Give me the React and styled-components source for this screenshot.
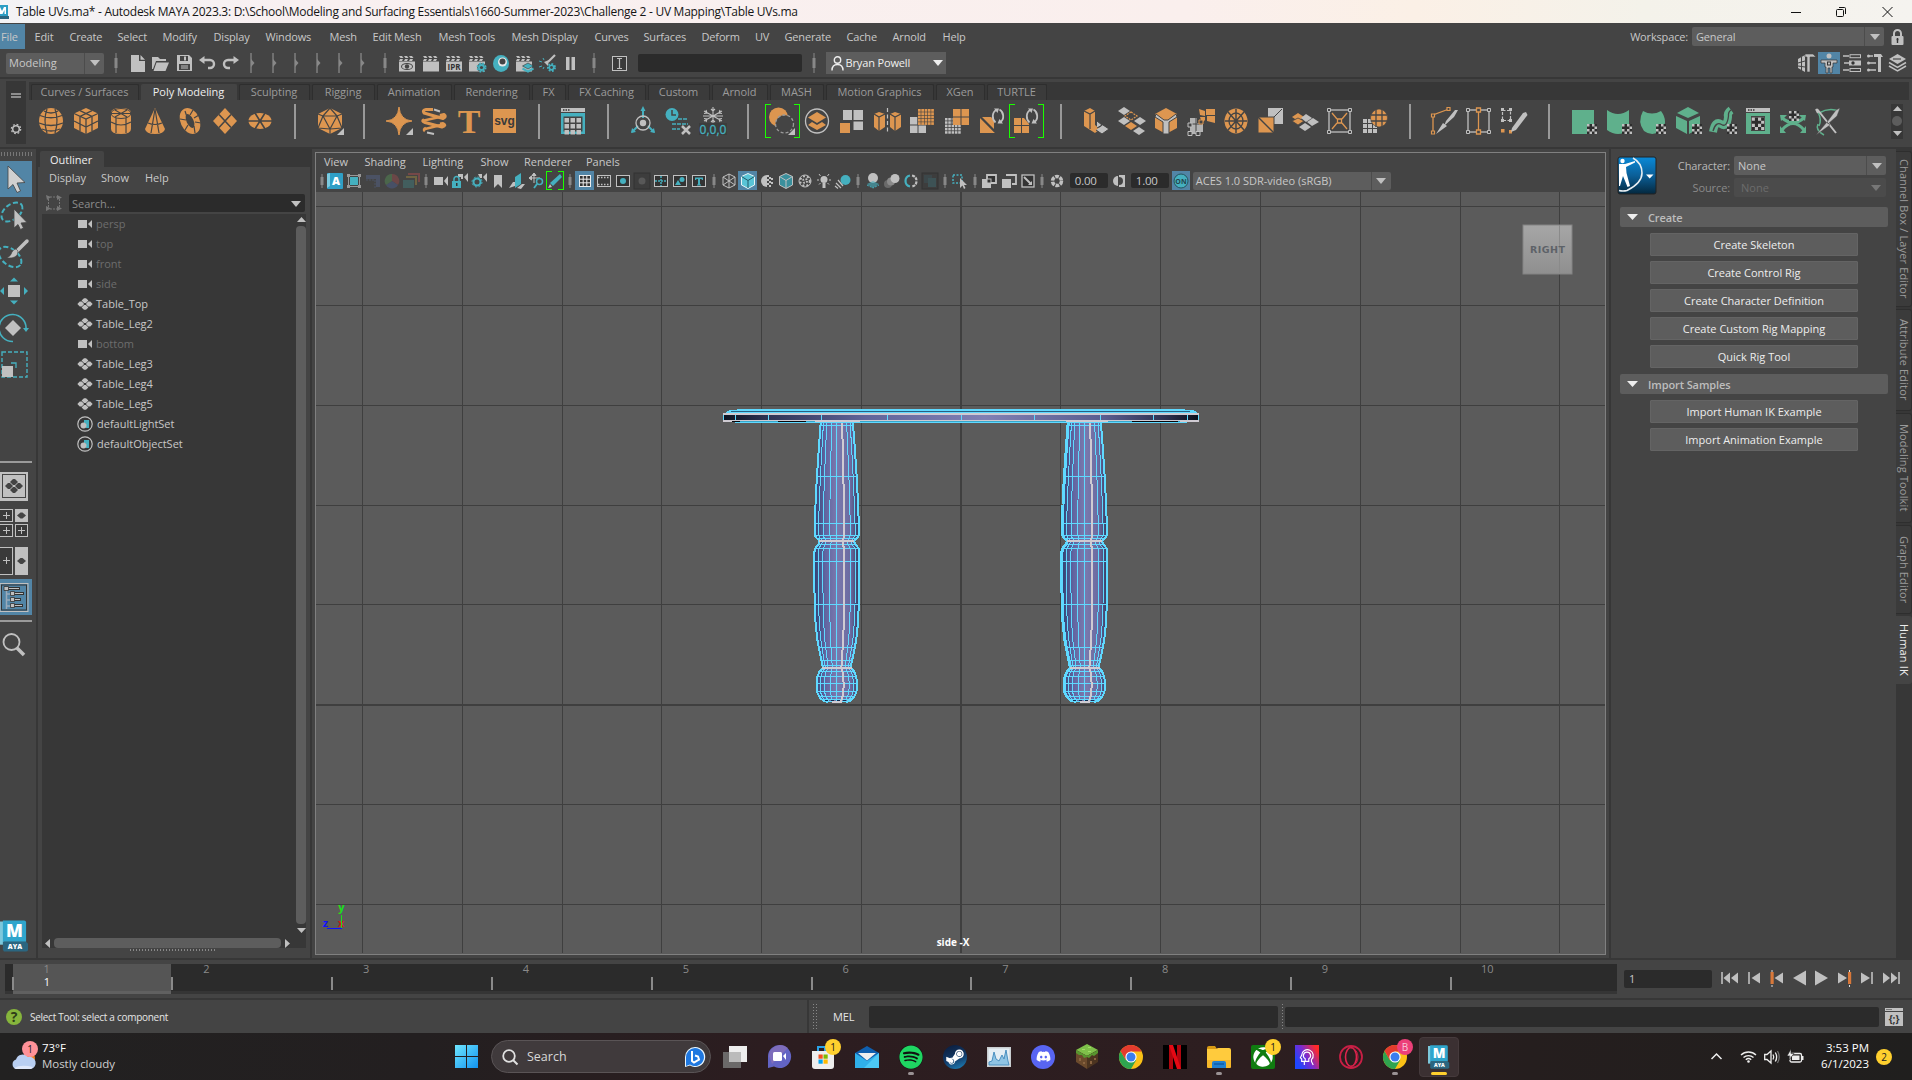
import React from "react";
import styled, { createGlobalStyle, css } from "styled-components";
import { FaSpotify, FaSteamSymbol, FaDiscord, FaXbox } from "react-icons/fa";

const O = "#dd9650";
const G = "#c0c0c0";
const T = "#45b0bf";
const N = "#5fb08c";
const BG = "#444444";
const DARK = "#373737";
const FIELD = "#2b2b2b";
const BTN = "#5d5d5d";
const BLUE = "#5285a6";

const Global = createGlobalStyle`
  * { box-sizing: border-box; }
  body { margin: 0; background: ${BG}; overflow: hidden; }
  #root { font-family: "Open Sans", "Noto Sans", sans-serif; font-size: 11px; color: #c8c8c8; }
`;

const Screen = styled.div`
  width: 1912px;
  height: 1080px;
  display: flex;
  flex-direction: column;
  background: ${BG};
  overflow: hidden;
  white-space: nowrap;
  line-height: 16px;
`;

const HLine = styled.div`
  height: 2px;
  flex: none;
  background: ${DARK};
`;
const VLine = styled.div`
  width: 2px;
  flex: none;
  align-self: stretch;
  background: ${DARK};
`;
const Spacer = styled.div`
  flex: ${(p) => (p.$w === undefined ? "1" : `0 0 ${p.$w}px`)};
`;
const Svg = styled.svg`
  display: block;
  flex: none;
  width: ${(p) => p.$w}px;
  height: ${(p) => p.$h}px;
  overflow: visible;
`;
const I = ({ w = 20, h = w, vw = w, vh = h, children }) => (
  <Svg $w={w} $h={h} viewBox={`0 0 ${vw} ${vh}`} fill="none">
    {children}
  </Svg>
);
const Slot = styled.div`
  flex: 0 0 ${(p) => p.$w}px;
  height: ${(p) => (p.$h ? `${p.$h}px` : "100%")};
  display: flex;
  align-items: center;
  justify-content: center;
  background: ${(p) => p.$bg || "transparent"};
`;

/* ---------- title bar ---------- */
const TitleBar = styled.header`
  height: 23px;
  flex: none;
  display: flex;
  align-items: center;
  background: linear-gradient(90deg, #f3f3f5, #f8f0f1 15%, #faefed 62%, #fbf0e6 74%, #f4f2ea 86%, #f5f3ef);
  color: #151515;
  font-size: 12px;
  letter-spacing: -0.27px;
`;
const TitleText = styled.div`
  width: 1765px;
  margin-left: 6px;
  padding-top: 1px;
`;

/* ---------- menu bar ---------- */
const MenuBar = styled.nav`
  height: 27px;
  flex: none;
  display: flex;
  align-items: center;
  letter-spacing: -0.16px;
`;
const MenuItem = styled.div`
  flex: 0 0 ${(p) => p.$w}px;
  height: ${(p) => (p.$active ? "25px" : "auto")};
  line-height: ${(p) => (p.$active ? "25px" : "16px")};
  ${(p) =>
    p.$active &&
    css`
      background: ${BLUE};
      margin-right: 9.500px;
      padding-left: 1px;
    `}
`;
const MENUS = [
  ["Edit", 35], ["Create", 48], ["Select", 45], ["Modify", 51], ["Display", 52], ["Windows", 64],
  ["Mesh", 43], ["Edit Mesh", 66], ["Mesh Tools", 73], ["Mesh Display", 83], ["Curves", 49],
  ["Surfaces", 58], ["Deform", 53.5], ["UV", 29.5], ["Generate", 62], ["Cache", 46], ["Arnold", 50], ["Help", 40],
];

const ComboBox = styled.div`
  flex: 0 0 ${(p) => p.$w}px;
  height: ${(p) => p.$h || 19}px;
  display: flex;
  align-items: center;
  background: ${(p) => (p.$dim ? "#4b4b4b" : BTN)};
  color: ${(p) => (p.$dim ? "#6c6c6c" : "#c8c8c8")};
  border-radius: 2px;
  padding-left: ${(p) => p.$pl || 4}px;
`;
const ComboText = styled.div`
  flex: 1;
`;
const ComboArrow = styled.div`
  width: ${(p) => p.$w || 20}px;
  height: 100%;
  display: flex;
  align-items: center;
  justify-content: center;
  border-left: ${(p) => (p.$plain ? "0" : "1px solid #4c4c4c")};
`;
const Tri = ({ c = G, w = 10, h = 6, d = "down" }) => (
  <I w={w} h={h}>
    <path
      fill={c}
      d={
        d === "down" ? `M0 0H${w}L${w / 2} ${h}Z`
        : d === "up" ? `M0 ${h}H${w}L${w / 2} 0Z`
        : d === "left" ? `M${w} 0V${h}L0 ${h / 2}Z`
        : `M0 0V${h}L${w} ${h / 2}Z`
      }
    />
  </I>
);

/* ---------- status line ---------- */
const StatusLine = styled.div`
  height: 27px;
  flex: none;
  display: flex;
  align-items: center;
  padding-bottom: 1px;
`;
const Handle = () => (
  <I w={4} h={20}>
    <path d="M2 0V20" stroke="#888" />
    <rect x="0.5" y="5" width="3" height="10" fill="#888" />
  </I>
);
const Collapse = () => (
  <I w={5} h={20}>
    <path d="M1 0V20" stroke="#888" strokeWidth="1.3" />
    <path d="M1 6L4.5 10L1 14Z" fill="#888" />
  </I>
);
const InputBox = styled.div`
  flex: 0 0 ${(p) => p.$w}px;
  height: ${(p) => p.$h || 18}px;
  background: ${FIELD};
  border-radius: 2px;
  display: flex;
  align-items: center;
  padding: 0 4px 0 5px;
  color: ${(p) => p.$c || "#c8c8c8"};
`;
const UserButton = styled.div`
  flex: 0 0 120px;
  height: 22px;
  background: ${BTN};
  display: flex;
  align-items: center;
  padding: 0 3px 0 5px;
  color: #f0f0f0;
  justify-content: space-between;
  letter-spacing: -0.15px;
`;
const UserName = styled.span`
  width: 85px;
`;

const Clap = ({ children }) => (
  <I w={17} h={17}>
    <path d="M0 1h3l1.500 2H1.500zM5 1h3l1.500 2h-3zM10 1h3l1.500 2h-3z M1 4h3l-1 2h-3zM6 4h3l-1 2h-3zM11 4h3l-1 2h-3z" fill={G} />
    <rect x="0" y="6.500" width="16" height="10" fill={G} />
    {children}
  </I>
);
const Gear = ({ x, y, r = 4, c = T }) => (
  <g>
    <circle cx={x} cy={y} r={r} fill={c} stroke="#333" strokeWidth="0.6" />
    <circle cx={x} cy={y} r={r} stroke={c} strokeWidth="2" strokeDasharray="1.7 1.500" />
    <circle cx={x} cy={y} r={r * 0.4} fill={BG} />
  </g>
);

const STATUS_ICONS = [
  [21, <I w={14} h={17}><path d="M0 0H8V6H14V17H0Z M9.500 0L14 4.700H9.500Z" fill={G} /></I>],
  [25, <I w={17} h={15}><path d="M0 1H6L8 3H14V5H4L1 13H0Z" fill={G} /><path d="M4.500 6.500H17L13.500 15H1.500Z" fill={G} /></I>],
  [22, <I w={15} h={16}><path d="M0 0H12L15 3V16H0Z" fill={G} /><rect x="3" y="1" width="8" height="5" fill={BG} /><rect x="7" y="1.500" width="2" height="4" fill={G} /><rect x="2" y="9" width="11" height="6" fill={BG} /><path d="M4 11h7M4 13h7" stroke={G} /></I>],
  [24, <I w={17} h={14}><path d="M3 4H11A4 4 0 0 1 11 12H9" stroke={G} strokeWidth="2.400" /><path d="M0 4L5.500 0V8Z" fill={G} /></I>],
  [22, <I w={17} h={14}><path d="M14 4H6A4 4 0 0 0 6 12H8" stroke={G} strokeWidth="2.400" /><path d="M17 4L11.500 0V8Z" fill={G} /></I>],
];
const RENDER_ICONS = [
  [23.4, <Clap><ellipse cx="8" cy="11.500" rx="6" ry="3.500" fill={BG} /><ellipse cx="8" cy="11.500" rx="5" ry="2.600" fill={G} /><circle cx="8" cy="11.500" r="2.200" fill={BG} /></Clap>],
  [23.4, <Clap />],
  [23.4, <Clap><text x="8" y="15" fontSize="8" fontWeight="700" textAnchor="middle" fill="#333">IPR</text></Clap>],
  [23.4, <Clap><Gear x={12.500} y={12.500} /></Clap>],
  [23, <I w={16} h={17}><ellipse cx="8" cy="8.500" rx="8" ry="8.500" fill={T} /><circle cx="9.500" cy="7" r="4.500" fill="#e8e8e8" /><circle cx="9.500" cy="6.500" r="3" fill={BG} /></I>],
  [23, <Clap><path d="M12 8l5.500 3l-5.500 3l-5.500-3z" fill={T} stroke="#333" strokeWidth=".6" /><path d="M6.500 13.500l5.500 3l5.500-3" stroke={T} strokeWidth="2" /></Clap>],
  [24, <I w={17} h={17}><path d="M16 0L9 7" stroke={G} strokeWidth="2.200" /><path d="M10 5L5 7L9 11Z" fill={G} /><path d="M0 6l3 1M0 12l3-1M4 14l1-2M4 3l1 2" stroke={T} /><Gear x={12.500} y={12.500} r={3.500} /></I>],
  [21, <I w={9} h={13}><path d="M0 0H3.500V13H0ZM5.500 0H9V13H5.500Z" fill={G} /></I>],
];

/* ---------- shelf ---------- */
const Shelf = styled.section`
  height: 68px;
  flex: none;
  display: flex;
`;
const ShelfGrip = styled.div`
  width: 20px;
  height: 63px;
  margin: 2px 3px 0 6px;
  background: ${DARK};
  display: flex;
  flex-direction: column;
  align-items: center;
  padding-top: 12px;
  gap: 25px;
`;
const ShelfBody = styled.div`
  flex: 1;
  margin: 3px 3px 0 0;
  display: flex;
  flex-direction: column;
`;
const TabStrip = styled.div`
  height: 18px;
  background: ${DARK};
  display: flex;
  align-items: flex-end;
  padding-left: 1.500px;
`;
const ShelfTab = styled.div`
  flex: 0 0 ${(p) => p.$w}px;
  height: 16px;
  line-height: 14.500px;
  text-align: center;
  letter-spacing: -0.05px;
  color: ${(p) => (p.$active ? "#eeeeee" : "#9a9a9a")};
  background: ${(p) => (p.$active ? BG : "#3b3b3b")};
  border: 1px solid ${(p) => (p.$active ? BG : "#2e2e2e")};
  border-bottom: 0;
  border-radius: 2px 2px 0 0;
  margin-right: 2px;
`;
const TABS = [
  ["Curves / Surfaces", 108], ["Poly Modeling", 96], ["Sculpting", 71], ["Rigging", 63], ["Animation", 75],
  ["Rendering", 76], ["FX", 34], ["FX Caching", 78], ["Custom", 62], ["Arnold", 56], ["MASH", 54],
  ["Motion Graphics", 108], ["XGen", 49], ["TURTLE", 60],
];
const ShelfIcons = styled.div`
  height: 42px;
  display: flex;
  align-items: center;
  padding-left: 4.600px;
`;
const ShelfSep = styled.div`
  width: 2px;
  height: 35px;
  background: #999;
`;
const Bracket = styled.div`
  position: relative;
  width: ${(p) => p.$w}px;
  height: ${(p) => p.$h}px;
  display: flex;
  align-items: center;
  justify-content: center;
  &::before, &::after {
    content: "";
    position: absolute;
    top: 0;
    bottom: 0;
    width: 5px;
    border: 1px solid #1aff00;
  }
  &::before { left: 0; border-right: 0; }
  &::after { right: 0; border-left: 0; }
`;
const ShelfScroll = styled.div`
  width: 12px;
  height: 35px;
  background: ${DARK};
  margin-left: 46px;
  display: flex;
  flex-direction: column;
  align-items: center;
  justify-content: space-around;
`;

const L = "#444";
const Checker = ({ x, y }) => (
  <g>
    <rect x={x} y={y} width="10" height="10" fill={G} />
    <path d={`M${x + 2.500} ${y}h2.500v2.500h2.500v2.500h-2.500v2.500h-2.500v-2.500h-2.500v-2.500h2.500z M${x + 7.500} ${y}h2.500v2.500h-2.500zM${x} ${y + 7.500}h2.500v2.500h-2.500zM${x + 7.500} ${y + 5}h2.500v2.500h-2.500zM${x + 5} ${y + 7.500}h2.500v2.500h-2.500z`} fill="#2d2d2d" />
  </g>
);
const Cells = ({ x, y, n, s, c, g = 1 }) => {
  const out = [];
  for (let i = 0; i < n; i++)
    for (let j = 0; j < n; j++)
      out.push(<rect key={`${i}-${j}`} x={x + i * (s + g)} y={y + j * (s + g)} width={s} height={s} fill={c} />);
  return <g>{out}</g>;
};
const S = ({ children }) => <I w={26} h={26}>{children}</I>;
const Spin = () => (
  <g>
    <path d="M16.500 14.500C12.500 11 13 4 17.500 2M20.500 1.500C25 4 25.500 11 21.500 14" stroke={G} strokeWidth="1.800" />
    <path d="M15 0.500L20 .5L18.500 5Z M24 15.500L18.500 15.500L20.500 11Z" fill={G} />
  </g>
);

const SHELF = [
  <S><ellipse cx="13" cy="13" rx="12" ry="13" fill={O} /><path d="M2 7.500Q13 12 24 7.500M1 15Q13 20 25 15M9 1Q5 12 9 25M17 1Q21 12 17 25M6 3Q13 7 20 3M4 21Q13 25 22 21" stroke={L} strokeWidth="1.300" /></S>,
  <S><path d="M13 0L25 5.500V20L13 26L1 20V5.500Z" fill={O} /><path d="M1 5.500L13 11L25 5.500M13 11V26M7 2.700L19 8.300V23M19 2.700L7 8.300V23M1 13L13 19L25 13" stroke={L} strokeWidth="1.300" /></S>,
  <S><path d="M3 5Q3 0 13 0T23 5V21Q23 26 13 26T3 21Z" fill={O} /><ellipse cx="13" cy="5.500" rx="10" ry="5" stroke={L} /><path d="M3 5.500H23M7 2L19 9M19 2L7 9M8 10V25M18 10V25M3 14Q13 20 23 14" stroke={L} strokeWidth="1.200" /></S>,
  <S><path d="M13 0L23 21Q22 26 13 26T3 21Z" fill={O} /><path d="M13 1L9 25M13 1L17 25M6 15Q13 18 20 15" stroke={L} strokeWidth="1.200" /></S>,
  <S><ellipse cx="13" cy="13" rx="6.500" ry="10.500" stroke={O} strokeWidth="6" transform="rotate(-25 13 13)" /><path d="M8 3l2 6M16 2l-3 5M3 11l6 1M8 22l3-5M18 25l-1-7M24 15l-6-1M22 7l-5 3" stroke={L} strokeWidth="1.200" /></S>,
  <S><path d="M13 0L25 13L13 26L1 13Z" fill={O} /><path d="M7 6.500L19 19.500M19 6.500L7 19.500" stroke={L} strokeWidth="1.600" /></S>,
  <S><ellipse cx="13" cy="13" rx="11.500" ry="8" fill={O} /><path d="M1 13H25M8 5L18 21M18 5L8 21" stroke={L} strokeWidth="1.600" /></S>,
  null,
  <S><path d="M13 0L25 6V20L13 26L1 20V6Z" fill={O} /><path d="M13 0L6 8H20ZM6 8L13 21L20 8M1 6L6 8L1 20L13 21L25 20L20 8L25 6M13 21V26" stroke={L} strokeWidth="1.200" /><path d="M27 20V27H20Z" fill={G} /></S>,
  null,
  <S><path d="M13 -1Q14 12 26 13Q14 14 13 27Q12 14 0 13Q12 12 13 -1Z" fill={O} stroke={O} /><path d="M27 20V27H20Z" fill={G} /></S>,
  <S>
    <path d="M12 1.500H5Q1 2 3 5L22 10.500Q26 9 23 6.500L19 7.500M3 11.500Q0 13 4 14.500L21 19Q26 17.500 22 15.500L19 16M5 20Q2 21.500 4 23" stroke={O} strokeWidth="3" strokeLinejoin="round" />
    <path d="M3 12.500L23 8M4 21L22 16.500" stroke={O} strokeWidth="2.400" />
    <path d="M6 24.500L13 26M13 1.500L19 3.500" stroke={G} strokeWidth="2" />
  </S>,
  <S><text x="13" y="25" fontSize="34" fontFamily="Liberation Serif, serif" fontWeight="700" textAnchor="middle" fill={O}>T</text></S>,
  <S><rect x="2" y="1" width="23" height="24" fill={O} /><text x="13.500" y="17" fontSize="12" fontWeight="700" fontFamily="Liberation Sans, sans-serif" textAnchor="middle" fill="#3a3a3a">svg</text></S>,
  null,
  <S><rect x="1" y="0" width="24" height="4" fill={G} /><path d="M3 2h1.500m1 0h1.500m1 0h1.500" stroke="#333" strokeWidth="1.500" /><rect x="1" y="5" width="24" height="21" fill={T} /><rect x="3.500" y="8.500" width="19" height="15" fill={BG} /><Cells x={4.500} y={10} n={3} s={4.500} g={1.500} c={G} /></S>,
  null,
  <S><path d="M13 0V10M2 24L8 18M18 18L24 24" stroke={T} strokeWidth="2" /><path d="M1 25l1-5l4 4zM25 25l-1-5l-4 4zM13 -2l-2.500 5h5z" fill={T} /><circle cx="13" cy="15" r="7" stroke={G} strokeWidth="1.300" /><circle cx="13" cy="15" r="3.200" fill={G} /></S>,
  <S><circle cx="7" cy="6.500" r="6.500" fill={T} /><path d="M7 2V7H11" stroke={BG} strokeWidth="1.500" /><path d="M13 11H23M7 16H23M7 21H15" stroke={T} strokeWidth="1.600" strokeDasharray="4 1" /><path d="M17 18L25 26M25 18L17 26" stroke={G} strokeWidth="2.500" /></S>,
  <S><path d="M13 -1V15M4 3L22 13M22 3L4 13M3 8H23M11 1l2 2l2-2M11 14l2-2l2 2M6 2l1 3l-3 .5M20 2l-1 3l3 .5M6 14l1-3l-3-.5M20 14l-1-3l3-.5" stroke={G} strokeWidth="1.100" /><rect x="-1" y="15" width="28" height="12" fill="#3c3c3c" /><text x="13" y="25.500" fontSize="12" textAnchor="middle" fill={T} stroke={T} strokeWidth=".3">0,0,0</text></S>,
  null,
  <Bracket $w={35} $h={34}><S><circle cx="9.500" cy="9" r="9.500" fill={O} /><circle cx="15.500" cy="16" r="9" fill={BG} stroke="#999" strokeWidth="1.300" strokeDasharray="3 2" /><path d="M26 20V27H19Z" fill={G} /></S></Bracket>,
  <S><ellipse cx="13" cy="13" rx="11.500" ry="12" stroke={G} strokeWidth="1.300" /><path d="M13 4L22 9.500L13 15L4 9.500Z" fill={O} /><path d="M13 17L18 14L22 17L13 22L4 17L8 14Z" fill={O} /></S>,
  <S><path d="M4 2H13V12H4ZM14.500 2H24V12H14.500ZM14.500 13.500H24V22H14.500Z" fill={G} /><rect x="1" y="15" width="10" height="10" fill={O} /></S>,
  <S><path d="M5 4L11 6V19L5 23L0 19V6Z M21 4L27 6V19L21 23L16 19V6Z" fill={O} /><path d="M0 6L5 9L11 6M5 9V23M16 6L21 9L27 6M21 9V23" stroke={L} strokeWidth="1.200" /><path d="M13.500 0V26" stroke={G} strokeWidth="1.200" strokeDasharray="4 2.500" /></S>,
  <S><Cells x={1} y={9} n={2} s={7.500} c={G} /><rect x="8.500" y="1" width="16.500" height="15.500" fill={BG} /><Cells x={9} y={1} n={5} s={2.700} c={O} g={0.600} /></S>,
  <S><Cells x={1} y={10} n={5} s={2.500} c={G} g={0.800} /><rect x="8.500" y="0" width="17" height="17" fill={BG} /><Cells x={9} y={1} n={2} s={7.500} c={O} /></S>,
  <S><path d="M1 10V25H16Z" fill={O} /><path d="M3 9H15V21Z" fill={O} /><path d="M1.500 9L16 24" stroke={L} strokeWidth="1.300" /><path d="M12 0H26V16H19L12 9Z" fill={BG} /><Spin /></S>,
  <Bracket $w={35} $h={34}><S><Cells x={1} y={10} n={2} s={7} c={O} /><path d="M11 0H26V16H16L11 10Z" fill={BG} /><Spin /></S></Bracket>,
  null,
  <S><path d="M7 0L12 3V17L17 21L12 25L1 18V3Z" fill={O} /><path d="M1 3L7 6L12 3M7 6V21" stroke={L} strokeWidth="1.200" /><path d="M14 13L19 17L14 20M20 17L26 21L19 26L13 22" fill={G} stroke={L} /></S>,
  <S><path d="M6 -1L12 3L6 7L0 3ZM6 9L12 13L6 17L0 13ZM22 9L28 13L22 17L16 13ZM21 19L27 23L21 27L15 23Z" fill={G} /><path d="M13 14L19 18L13 22L7 18Z" fill={O} /><path d="M13 4L19 8L13 12L7 8Z" stroke={O} strokeWidth="1.200" strokeDasharray="2 1" /></S>,
  <S><path d="M13 0L24 6V20L13 26L2 20V6Z" fill={O} /><path d="M3 6L11 12H15L23 6L24 9L16 14V26H10V14L2 9Z" fill={G} stroke={L} /></S>,
  <S><path d="M11 1L17 3V8L12 7ZM18 1H27V7H18ZM19 8H27V15L19 13ZM12 9L17 9V12L14 15Z" fill={O} /><path d="M2 10H9V15H15V24H8V26H2Z" fill={G} opacity=".9" /><path d="M2 16h12M8 10v15" stroke={L} /><path d="M0 15h4v4h-4zM0 23.500h4v4h-4zM8 23.500h4v4h-4z" fill={BG} stroke={G} /><path d="M11 12h4v4h-4z" fill={BG} stroke={O} /></S>,
  <S><ellipse cx="13" cy="13" rx="11.500" ry="12.500" fill={O} /><ellipse cx="13" cy="13" rx="7" ry="8" stroke={L} strokeWidth="1.300" /><path d="M2 13H24M13 1V25M5 4L21 22M21 4L5 22" stroke={L} strokeWidth="1.500" /></S>,
  <S><path d="M11 0H26V16H17V9H11Z" fill={G} /><path d="M17 9L25 1" stroke={L} /><rect x="1" y="9" width="16" height="16" fill={O} stroke={L} /><path d="M1 9L17 25" stroke={L} strokeWidth="1.500" /></S>,
  <S><path d="M6 5L12 9L6 13L0 9Z" fill={O} /><path d="M0 13L6 10L12 13L6 17Z" fill={O} stroke={L} strokeWidth=".8" /><path d="M14 6L20 10L14 14L9 10ZM21 10L27 14L20 18L15 14ZM13 15L19 19L13 23L7 19Z" fill={G} /></S>,
  <S><rect x="2" y="2" width="21" height="22" stroke={G} strokeWidth="1.300" /><path d="M5 5L10 11M20 5L15 11M5 21L10 15M20 21L15 15" stroke={O} strokeWidth="1.300" /><path d="M10.500 11h4v4h-4z" stroke={O} strokeWidth="1.300" /><path d="M0.500 .5h3v3h-3zM21.500 .5h3v3h-3zM.5 22.500h3v3h-3zM21.500 22.500h3v3h-3z" fill={BG} stroke={G} /></S>,
  <S><Cells x={1} y={11} n={3} s={4} c={G} /><ellipse cx="17" cy="10" rx="8.500" ry="9" fill={O} stroke={L} strokeWidth=".6" /><path d="M9 7H25M9 13H25M14 1V19M20 1V19" stroke={L} strokeWidth="1.300" /></S>,
  null,
  <S><path d="M2 24V7L18 1" stroke={O} strokeWidth="1.300" /><path d="M0.500 23h3v3h-3zM.5 6h3v3h-3zM16 -.5h3v3h-3z" fill={BG} stroke={O} strokeWidth="1.200" /><path d="M27 2L23 9L13 18L15 13L24 2Z M12 15L16 18L5 26Z" fill={G} /></S>,
  <S><rect x="2" y="2" width="21" height="22" stroke={G} strokeWidth="1.300" /><path d="M12.500 3V23" stroke={O} strokeWidth="1.300" /><path d="M0.500 .5h3v3h-3zM21.500 .5h3v3h-3zM.5 22.500h3v3h-3zM21.500 22.500h3v3h-3z" fill={BG} stroke={G} /><path d="M10.500 0h4v4h-4zM10.500 22h4v4h-4z" fill={BG} stroke={O} strokeWidth="1.300" /></S>,
  <S><rect x="1.500" y="2.500" width="8" height="10" stroke={G} strokeWidth="1.200" strokeDasharray="3 1.500" /><path d="M0 0h3v3h-3zM8 0h3v3h-3zM0 11h3v3h-3zM8 11h3v3h-3z" fill={G} /><rect x="0" y="21" width="3.500" height="3.500" fill={O} /><rect x="8" y="22" width="3" height="3.500" fill={O} /><path d="M11 20L22 5L25 4L26.500 7L15 22L10 24Z" fill={G} /></S>,
  null,
  <S><rect x="1" y="2" width="22" height="24" fill={N} /><Checker x={16} y={16} /></S>,
  <S><path d="M1 2Q12 10 23 2V22Q12 30 1 22Z" fill={N} /><Checker x={16} y={16} /></S>,
  <S><path d="M3 3Q12 8 21 3Q29 14 21 23Q12 29 4 23Q-3 14 3 3Z" fill={N} /><Checker x={16} y={16} /></S>,
  <S><path d="M13 -1L24 5L13 10L2 5ZM1 8L12 13V26L1 20ZM14 13L25 8V20L14 26Z" fill={N} /><Checker x={17} y={16} /></S>,
  <S><path d="M3 24Q5 12 11 16T18 9Q17 5 21 2" stroke={N} strokeWidth="8" /><path d="M3 23Q6 13 11.500 16.500T18.500 8Q18 4 21 2" stroke={L} strokeWidth="1.300" /><Checker x={17} y={16} /></S>,
  <S><rect x="1" y="0" width="24" height="4" fill={G} /><path d="M3 2h1.500m1 0h1.500m1 0h1.500" stroke="#333" strokeWidth="1.500" /><rect x="1" y="5" width="24" height="21" fill={N} /><rect x="6" y="8" width="14" height="15" fill={BG} /><g transform="translate(-3.500,-3) scale(1.250)"><Checker x={8.200} y={10} /></g></S>,
  <S><path d="M2 10Q13 19 24 10M2 22Q13 9 24 22" stroke={N} strokeWidth="3" /><path d="M0 7L7 7L1 13ZM26 7L19 7L25 13ZM0 25V18L6 25ZM26 25V18L20 25Z" fill={N} /><Checker x={9} y={3} /></S>,
  <S><path d="M4 5Q14 -1 24 3M3 16Q0 22 9 27M3 4Q7 12 4 18" stroke={N} strokeWidth="1.500" /><path d="M2 1L21 25M1 1l2 4" stroke={G} strokeWidth="2" /><path d="M25 0L22 8L13 16L12 14L21 2Z M12 14L15 17L1 27Z" fill={G} stroke={L} strokeWidth=".5" /></S>,
];

/* ---------- main area ---------- */
const Main = styled.main`
  height: 809px;
  flex: none;
  display: flex;
`;
const Toolbox = styled.aside`
  width: 36px;
  flex: none;
  display: flex;
  flex-direction: column;
  padding-top: 3px;
`;
const Dots = styled.div`
  width: 32px;
  height: 4px;
  flex: none;
  margin-bottom: 5px;
  background-image: radial-gradient(circle, #777 0.8px, transparent 1px);
  background-size: 3px 2px;
`;
const Tool = styled.div`
  width: 32px;
  height: ${(p) => p.$h || 38}px;
  flex: none;
  display: flex;
  align-items: center;
  justify-content: flex-start;
  background: ${(p) => (p.$active ? BLUE : "transparent")};
`;
const ToolSep = styled.div`
  width: 32px;
  height: 2px;
  flex: none;
  background: #9a9a9a;
  margin-top: ${(p) => p.$mt}px;
  margin-bottom: ${(p) => p.$mb}px;
`;
const diamonds = (cx, cy, c, k = 1) => (
  <g fill={c}>
    {[[0, -4], [-5, 0], [5, 0], [0, 4]].map(([x, y], i) => {
      const X = cx + x * k;
      const Y = cy + y * k;
      const a = 4 * k;
      const b = 2.900 * k;
      return <path key={i} d={`M${X - a} ${Y}L${X - 1} ${Y - b}H${X + 1}L${X + a} ${Y}L${X + 1} ${Y + b}H${X - 1}Z`} />;
    })}
  </g>
);
const Flat = ({ x, y }) => <path d={`M${x - 4.500} ${y}L${x - 1} ${y - 3}H${x + 1}L${x + 4.500} ${y}L${x + 1} ${y + 3}H${x - 1}Z`} fill="#444" />;
const Plus = ({ x, y }) => <path d={`M${x - 3.500} ${y}h7M${x} ${y - 3.500}v7`} stroke={G} strokeWidth="1" />;

const MayaLogo = ({ w, h }) => (
  <I w={w} h={h} vw={30} vh={32}>
    <path d="M0 1H4V25H0Z" fill="#7cc8dc" />
    <path d="M3 0H25Q27 0 27 2V22H3Z" fill="#2fa5cc" />
    <path d="M3 22H27L29 24V30Q29 32 27 32H4L3 30Z" fill="#2b6680" />
    <text x="15" y="17.500" fontSize="18" fontWeight="800" textAnchor="middle" fill="#fff">M</text>
    <text x="15.500" y="29.500" fontSize="7" fontWeight="800" textAnchor="middle" fill="#fff">AYA</text>
  </I>
);

/* ---------- outliner ---------- */
const Outliner = styled.section`
  width: 272px;
  flex: none;
  display: flex;
  flex-direction: column;
`;
const OutlinerTabs = styled.div`
  height: 18px;
  background: ${DARK};
  padding: 2px 0 0 2px;
`;
const OutlinerTab = styled.div`
  width: 64px;
  height: 16px;
  background: ${BG};
  border-radius: 2px 2px 0 0;
  padding-left: 10px;
  line-height: 17px;
  color: #eee;
`;
const OutlinerMenu = styled.div`
  height: 23px;
  display: flex;
  padding: 0 0 1px 11px;
  align-items: center;
`;
const SearchRow = styled.div`
  height: 24px;
  display: flex;
  align-items: center;
  padding: 1px 0 0 8px;
  gap: 7px;
`;
const SearchField = styled.div`
  width: 236px;
  height: 18px;
  background: ${FIELD};
  border-radius: 2px;
  display: flex;
  align-items: center;
  justify-content: space-between;
  padding: 2px 4px 0 3px;
  color: #8c8c8c;
  font-size: 11px;
`;
const Tree = styled.div`
  width: 264px;
  height: 734px;
  margin-left: 4px;
  background: ${DARK};
  display: flex;
  flex-direction: column;
`;
const TreeBody = styled.div`
  height: 724px;
  display: flex;
  justify-content: space-between;
`;
const Rows = styled.div`
  padding-left: 35px;
`;
const Row = styled.div`
  height: 20px;
  display: flex;
  align-items: center;
  gap: ${(p) => (p.$set ? 4 : 3)}px;
  color: ${(p) => (p.$dim ? "#6d6d6d" : "#c8c8c8")};
`;
const VScroll = styled.div`
  width: 10px;
  display: flex;
  flex-direction: column;
  align-items: center;
  padding: 3px 0 5px;
  gap: 4px;
`;
const HScroll = styled.div`
  height: 10px;
  display: flex;
  align-items: center;
  padding-left: 3px;
  gap: 4px;
`;
const Thumb = styled.div`
  flex: ${(p) => (p.$w ? `0 0 ${p.$w}px` : "1")};
  width: ${(p) => (p.$w ? p.$w : 10)}px;
  height: ${(p) => (p.$w ? "10px" : "auto")};
  border-radius: 4px;
  background: ${BTN};
`;
const ResizeDots = styled.div`
  width: 86px;
  height: 2px;
  margin: 1px 0 0 92px;
  background: repeating-linear-gradient(90deg, #888 0 1px, transparent 1px 3px);
`;
const CamIcon = () => <I w={16} h={10}><path d="M1 1H10V9H1Z M11 5L15 1V9Z" fill={G} /></I>;
const MeshIcon = () => <I w={16} h={12}>{diamonds(8, 6, G, 0.85)}</I>;
const SetIcon = () => (
  <I w={16} h={16}><circle cx="8" cy="8" r="7.200" stroke={G} strokeWidth="1.200" /><path d="M7 4H12V12H9V7H7Z" fill={T} /><circle cx="6.500" cy="9.500" r="3" fill={G} /></I>
);
const NODES = [
  ["persp", "c"], ["top", "c"], ["front", "c"], ["side", "c"], ["Table_Top", "m"], ["Table_Leg2", "m"], ["bottom", "c"],
  ["Table_Leg3", "m"], ["Table_Leg4", "m"], ["Table_Leg5", "m"], ["defaultLightSet", "s"], ["defaultObjectSet", "s"],
];

/* ---------- viewport ---------- */
const ViewWrap = styled.section`
  width: 1297px;
  flex: none;
  padding: 3px 3px 3px 3px;
`;
const ViewFrame = styled.div`
  width: 1291px;
  height: 803px;
  border: 1px solid #808080;
  display: flex;
  flex-direction: column;
`;
const ViewMenu = styled.div`
  height: 18px;
  flex: none;
  display: flex;
  align-items: center;
  padding: 0 0 0 8px;
`;
const ViewTools = styled.div`
  height: 21px;
  flex: none;
  display: flex;
  align-items: center;
  padding: 0 0 2px 2px;
`;
const Canvas = styled.div`
  flex: 1;
  background: #5b5b5b;
  overflow: hidden;
`;
const V = ({ children }) => <I w={16} h={16}>{children}</I>;
const HexCube = ({ a, b, s }) => (
  <V><path d="M8 0.500L14.500 3.500V12L8 15.500L1.500 12V3.500Z" fill={a} stroke={b} /><path d="M1.500 3.500L8 7.500L14.500 3.500M8 7.500V15" stroke={s} /></V>
);
const NumField = styled(InputBox)`
  height: 15px;
  font-size: 11.500px;
  letter-spacing: -0.2px;
`;

const VIEW_TOOLS = [
  "h",
  [<V><rect x="0" y="0" width="16" height="16" rx="1" fill="#2f9fc6" /><path d="M0 1L3 0V13L0 15Z" fill="#7ccbe0" /><text x="9" y="12" fontSize="11" fontWeight="800" textAnchor="middle" fill="#fff">A</text></V>],
  [<V><rect x="2.500" y="2.500" width="11" height="11" stroke="#999" /><rect x="4" y="4" width="8" height="8" fill={T} /><path d="M1 1h3v3h-3zM12 1h3v3h-3zM1 12h3v3h-3zM12 12h3v3h-3z" fill="#999" /></V>],
  [<V><path d="M1 2H15V14H11V6H1Z" fill="#4b5264" /><path d="M1 7H10V15" stroke="#4b5264" strokeDasharray="2 1" /></V>],
  [<V><g opacity=".28"><path d="M8 1A7 7 0 0 1 14 12L8 8Z" fill="#d05050" /><path d="M14 12A7 7 0 0 1 2 12L8 8Z" fill="#5070c0" /><path d="M2 12A7 7 0 0 1 8 1V8Z" fill="#60c060" /></g></V>],
  [<V><g opacity=".35"><path d="M5 1H16V9" stroke="#d05050" strokeWidth="2" /><path d="M3 4H13V12" stroke="#c0a040" strokeWidth="2" /><rect x="0" y="7" width="11" height="8" fill="#3f8f8f" /></g></V>],
  "h",
  [<V><path d="M1 4H10V12H1ZM11 8L15 3V13Z" fill={G} /></V>],
  [<V><path d="M6 1H11V6H9V4H6ZM12 4L16 0V9Z" fill={G} /><path d="M2 8V6a2.500 2.500 0 0 1 5 0V8" stroke={T} strokeWidth="1.500" /><rect x="0" y="8" width="9" height="7" fill={T} /><rect x="4" y="10" width="1.500" height="3" fill="#333" /></V>],
  [<V><path d="M7 1H11V5H9ZM12 4L16 0V9Z" fill={G} /><circle cx="6" cy="9" r="3.500" stroke={T} strokeWidth="2" /><circle cx="6" cy="9" r="5" stroke={T} strokeDasharray="2 1.900" /></V>],
  [<V><path d="M4 2H12V15L8 11L4 15Z" fill={G} /></V>],
  [<V><path d="M6 4L12 0V11L6 15Z" fill={T} /><path d="M0 15L4 9H6V13M8 15L13 11H16L12 16Z" fill={G} /></V>],
  [<V><path d="M6 0V10M1 5H12M6 0l-2 2.500h4zM1 5l2.500-2v4z" stroke={G} fill={G} strokeWidth="1" /><circle cx="11.500" cy="8.500" r="3" stroke={T} strokeWidth="1.500" fill={BG} /><path d="M9 11L6 15" stroke={T} strokeWidth="1.800" /></V>],
  [<Bracket $w={18} $h={19}><V><path d="M13 1L15 4L6 13L3 10Z" fill={T} /><path d="M3 11L5 14L1 15Z" fill={G} /></V></Bracket>],
  "h",
  [<V><rect x="2.500" y="2.500" width="11" height="11" fill="#333" stroke="#eee" /><path d="M2 6.200H14M2 9.800H14M6.200 2V14M9.800 2V14" stroke="#eee" /></V>, BLUE],
  [<V><rect x="1.500" y="2.500" width="13" height="11" stroke={G} fill="#3a3a3a" /><path d="M2 4.500H14M2 11.500H14" stroke={G} strokeWidth="1.500" strokeDasharray="1.500 1.500" /></V>],
  [<V><rect x="1.500" y="2.500" width="13" height="11" stroke={G} fill="#333" /><circle cx="8" cy="8" r="3" fill={T} /></V>],
  [<V><rect x="0" y="0" width="16" height="16" fill="#3d3d3d" stroke="#333" /><circle cx="8" cy="8" r="3.500" fill="#585858" /></V>],
  [<V><rect x="1.500" y="2.500" width="13" height="11" stroke={G} fill="#333" /><path d="M8 3V13M2 8H14" stroke={T} strokeDasharray="2 1" strokeWidth="1.500" /></V>],
  [<V><rect x="1.500" y="2.500" width="13" height="11" stroke={G} fill="#333" /><path d="M3 12L6 7L9 12Z" fill={T} /><circle cx="10" cy="6.500" r="2.500" fill={T} /></V>],
  [<V><rect x="1.500" y="2.500" width="13" height="11" stroke={G} fill="#333" /><path d="M4 4.500H12V7H11L10.500 6H9V11.500H10V12.500H6V11.500H7V6H5.500L5 7H4Z" fill={T} /></V>],
  "h",
  [<V><path d="M8 1L14 4V12L8 15L2 12V4ZM2 4L14 12M14 4L2 12M8 1V15" stroke={G} fill="none" /></V>],
  [<HexCube a="#59c4d6" b="#e8f4f6" s="#205a6a" />, BLUE],
  [<V><path d="M8 2A6 6 0 0 0 8 14Z" fill={G} /><path d="M8 2h2v2h-2zM10 4h2v2h-2zM12 5h2v2h-2zM8 6h2v2h-2zM10 8h2v2h-2zM12 9h2v2h-2zM8 10h2v2h-2zM10 12h2v2h-2z" fill={G} /></V>],
  [<HexCube a="#3a8f9c" b={G} s={G} />],
  [<V><circle cx="8" cy="8" r="6" stroke={G} strokeWidth="1" /><circle cx="8" cy="8" r="4.800" stroke={G} strokeWidth="2" strokeDasharray="2 2" /><circle cx="8" cy="8" r="2" stroke={G} strokeWidth="2" strokeDasharray="1.500 1.500" /></V>],
  [<V><circle cx="8" cy="6.500" r="3.500" fill={G} /><path d="M6.500 10H9.500V15H6.500Z" fill={G} /><path d="M1 7H3M13 7H15M3 1L4.500 3M13 1L11.500 3M3 11.500L4.500 10M13 11.500L11.500 10" stroke={G} /></V>],
  [<V><circle cx="10.500" cy="7" r="5" fill={T} /><path d="M1 10L6 15M0 13L3 15.500M3 7L8 13" stroke={G} strokeWidth="1.200" /></V>],
  "h",
  [<V><circle cx="8" cy="5" r="5" fill={G} /><path d="M2 11L8 8L14 11L8 15Z" fill={T} opacity=".6" /><path d="M2 12L8 15L14 12" stroke={T} strokeDasharray="2 1" /></V>],
  [<V><circle cx="4" cy="11" r="4" fill="#6a6a6a" /><circle cx="7" cy="8.500" r="4" fill="#8a8a8a" /><circle cx="11" cy="5.500" r="4.500" fill={G} /></V>],
  [<V><path d="M7 2.500Q2.500 3.500 2.500 8T7 13.500" stroke={T} strokeWidth="2.200" /><path d="M9 2.500Q13.500 3.500 13.500 8T9 13.500" stroke={G} strokeWidth="2.200" strokeDasharray="3 1" /></V>],
  [<V><rect x="0" y="0" width="16" height="16" fill="#3d3d3d" stroke="#333" /><rect x="2" y="2" width="8" height="8" fill="#3c474a" /><rect x="6" y="5" width="8" height="9" fill="#3d5255" /></V>],
  "h",
  [<V><rect x="1" y="2" width="9" height="8" stroke={T} strokeWidth="1.500" strokeDasharray="2 1.500" /><path d="M8 5V15L10.500 12.500L12 16L13.500 15L12 12H15Z" fill={G} /></V>],
  "h",
  [<V><path d="M6 2H15V10H6Z" stroke={G} strokeWidth="1.800" fill="#333" /><rect x="1" y="6" width="9" height="9" fill={G} /><rect x="6" y="6" width="4" height="4" fill="#333" stroke={G} /></V>],
  [<V><path d="M5 2H15V11H11" stroke={G} strokeWidth="1.800" fill="none" /><rect x="1" y="6" width="9" height="9" fill={G} /></V>],
  [<V><rect x="2" y="2" width="12" height="12" stroke={G} strokeWidth="1.300" fill="#333" /><path d="M4 4L11 11" stroke={G} strokeWidth="2" /><path d="M12 12V8L8 12Z" fill={G} /></V>],
  "h",
  [<V><circle cx="8" cy="8" r="4.500" stroke={G} strokeWidth="3.500" strokeDasharray="3.700 1" /></V>],
];

const LEG = [
  [421, 16.500], [447, 18.500], [477, 20.500], [500, 21.800], [523, 22.700], [535, 22.700], [538, 21], [541, 17.500], [544, 19],
  [549, 22.800], [556, 23.300], [580, 23.300], [604, 22.700], [622, 22], [640, 20], [655, 17], [664, 15], [668, 14.500],
  [671, 17.500], [676, 19.800], [682, 20.800], [688, 20.800], [693, 20], [698, 17], [701, 13.500], [702, 9],
];
const RINGS = [425, 476, 523, 535, 538, 544, 548, 561, 604, 647, 660, 665, 671, 676, 683, 691, 696, 699];
const halfAt = (y) => {
  for (let i = 1; i < LEG.length; i++) {
    const [y0, r0] = LEG[i - 1];
    const [y1, r1] = LEG[i];
    if (y <= y1) return r0 + ((r1 - r0) * (y - y0)) / (y1 - y0);
  }
  return 12;
};
const column = (cx, f) => LEG.map(([y, r]) => `${(cx + r * f).toFixed(1)},${y}`).join(" ");
const Leg = ({ cx, shift }) => (
  <g fill="none" strokeWidth="1" stroke="#5fd9ff" shapeRendering="crispEdges">
    <polygon points={`${column(cx, -1)} ${LEG.slice().reverse().map(([y, r]) => `${cx + r},${y}`).join(" ")}`} fill="url(#leg)" stroke="none" />
    {[-0.8, -0.6, -0.31, 0, 0.59, 0.8].map((f) => <polyline key={f} points={column(cx, f)} />)}
    <polyline points={column(cx, -0.97)} strokeWidth="2" />
    <polyline points={column(cx, 0.97)} strokeWidth="2" />
    {shift !== 0 && <polyline points={column(cx + shift, -0.97)} />}
    {RINGS.map((y) => <path key={y} d={`M${cx - halfAt(y)} ${y + 0.5}H${cx + halfAt(y)}`} />)}
    <path d={`M${cx - 12} 700.500H${cx + 12}`} stroke="#0e2f55" strokeDasharray="3 3" />
    <g stroke="#cfcbd2" strokeWidth="2">
      <polyline points={column(cx, 0.32)} />
      <path d={`M${cx - 17.500} 541H${cx + 17}M${cx - 14.500} 668H${cx + 15}M${cx - 5} 702H${cx + 5}`} />
    </g>
  </g>
);
const VX = [362, 462, 562, 661, 761, 861, 1060, 1160, 1260, 1360, 1460, 1559];
const HY = [206, 305, 405, 505, 604, 804, 904];
const Scene = () => (
  <Svg $w={1289} $h={761} viewBox="316 192 1289 761">
    <defs>
      <linearGradient id="leg">
        <stop offset="0" stopColor="#2c3f70" />
        <stop offset=".25" stopColor="#6064a0" />
        <stop offset=".5" stopColor="#7a7aae" />
        <stop offset=".8" stopColor="#6a6aa0" />
        <stop offset="1" stopColor="#2c3458" />
      </linearGradient>
      <linearGradient id="slab">
        <stop offset="0" stopColor="#0c1220" />
        <stop offset=".1" stopColor="#2f3557" />
        <stop offset=".3" stopColor="#60649a" />
        <stop offset=".55" stopColor="#8080b4" />
        <stop offset=".8" stopColor="#5a5e90" />
        <stop offset=".93" stopColor="#2c3050" />
        <stop offset="1" stopColor="#0a0e18" />
      </linearGradient>
      <linearGradient id="cube" x2="0" y2="1">
        <stop offset="0" stopColor="#a9a9a9" />
        <stop offset="1" stopColor="#929292" />
      </linearGradient>
    </defs>
    <g stroke="#3f3f3f" shapeRendering="crispEdges">
      {VX.map((x) => <path key={x} d={`M${x + 0.5} 192V953`} />)}
      {HY.map((y) => <path key={y} d={`M316 ${y + 0.5}H1605`} />)}
      <path d="M961 192V953M316 705H1605" strokeWidth="2" />
    </g>
    <Leg cx={836.800} shift={0} />
    <Leg cx={1084.800} shift={-1.500} />
    <g shapeRendering="crispEdges">
      <path d="M725 413L729 410.500L741 409H1181L1194 410.500L1198 413Z" fill="#5fd9ff" />
      <path d="M731 411.500H1190" stroke="#2a5f80" />
      <rect x="723" y="415" width="476" height="5" fill="url(#slab)" />
      <path d="M723 414H1199M723 420.500H1199" stroke="#cfcbd2" strokeWidth="2" />
      <path d="M723.500 415V420M1198.500 415V420" stroke="#5fd9ff" />
      <path d="M735 422.500H1187" stroke="#5fd9ff" />
      <path d="M738 421.500H815M860 421.500H1066M1108 421.500H1180" stroke="#38a8cc" />
      <path d="M732 421.500H740M778 421.500H806M1132 421.500H1178" stroke="#050a10" />
      <path d="M735.500 415V420M768.500 415V420M821.500 415V420M887.500 415V420M961.500 415V420M1034.500 415V420M1100.500 415V420M1153.500 415V420M1187.500 415V420" stroke="#5fd9ff" />
    </g>
    <rect x="1523" y="225" width="49" height="49" fill="url(#cube)" stroke="#858585" opacity=".96" />
    <path d="M1559.500 225V274" stroke="#8a8a8a" />
    <text x="1547.500" y="253" fontSize="9.500" fontWeight="700" textAnchor="middle" fill="#5d6268" textLength="35" fontFamily="DejaVu Sans, sans-serif">RIGHT</text>
    <g fontSize="11" fontWeight="700">
      <text x="341.500" y="911" textAnchor="middle" fill="#1be01b">y</text>
      <text x="341" y="927" textAnchor="middle" fill="#d01818">x</text>
      <text x="325.500" y="927" textAnchor="middle" fill="#1010ff">z</text>
    </g>
    <path d="M341.500 915V928" stroke="#1be01b" shapeRendering="crispEdges" />
    <path d="M327 928.500H342" stroke="#1010ff" shapeRendering="crispEdges" />
    <text x="953" y="945.500" fontSize="10" fontWeight="700" textAnchor="middle" fill="#fff">side -X</text>
  </Svg>
);

/* ---------- Human IK panel ---------- */
const Panel = styled.aside`
  width: 285px;
  flex: none;
  padding-top: 7px;
`;
const HeadRow = styled.div`
  display: flex;
  padding-left: 7px;
  height: 51px;
`;
const LabelRows = styled.div`
  display: grid;
  grid-template-columns: 73px 152px;
  grid-auto-rows: 19px;
  row-gap: 3px;
  column-gap: 4px;
`;
const Label = styled.div`
  text-align: right;
  line-height: 19px;
  letter-spacing: -0.1px;
  color: ${(p) => (p.$dim ? "#8a8a8a" : "#b8b8b8")};
`;
const Section = styled.div`
  width: 268px;
  height: 20px;
  margin: 0 0 6px 9px;
  background: ${BTN};
  border-radius: 2px;
  display: flex;
  align-items: center;
  gap: 10px;
  padding: 0 0 0 7px;
  font-weight: 600;
  letter-spacing: -0.1px;
  color: #bdbdbd;
`;
const SectionLabel = styled.span`
  padding-top: 2px;
`;
const PanelButton = styled.button`
  display: block;
  width: 208px;
  height: 23px;
  margin: 0 0 ${(p) => (p.$last ? 6 : 5)}px 39px;
  padding: 0;
  border: 1px solid #646464;
  border-radius: 1px;
  background: ${BTN};
  color: #eeeeee;
  font: inherit;
`;
const SideTabs = styled.div`
  width: 16px;
  flex: none;
  background: ${DARK};
  padding-top: 2px;
`;
const SideTab = styled.div`
  height: ${(p) => p.$h}px;
  margin-bottom: 2px;
  width: 16px;
  writing-mode: vertical-rl;
  text-align: center;
  line-height: 13px;
  letter-spacing: 0.15px;
  color: ${(p) => (p.$active ? "#eee" : "#9a9a9a")};
  background: ${(p) => (p.$active ? BG : "#3b3b3b")};
  border: 1px solid ${(p) => (p.$active ? BG : "#2e2e2e")};
  border-left: 0;
  border-radius: 0 3px 3px 0;
`;

/* ---------- timeline ---------- */
const TimeRow = styled.div`
  height: 38px;
  flex: none;
  display: flex;
  padding: 4px 0 0 5px;
`;
const Track = styled.div`
  width: 1612px;
  height: 30px;
  background: linear-gradient(${FIELD} 27px, #353535 27px);
`;
const TransportRow = styled.div`
  display: flex;
  height: 30px;
  align-items: center;
  padding-left: 7px;
`;
const Transport = styled.div`
  display: flex;
  align-items: center;
  justify-content: space-between;
  width: 179px;
  margin-left: 9px;
  height: 28px;
  margin-bottom: 2px;
`;
const Timeline = () => (
  <Svg $w={1612} $h={30} viewBox="5 964 1612 30">
    <rect x="13" y="964" width="158" height="30" fill="#555" />
    <rect x="13" y="991" width="158" height="3" fill="#606060" />
    {Array.from({ length: 10 }, (_, i) => (
      <g key={i}>
        <rect x={Math.round(11.500 + i * 159.800)} y="977" width="2" height="13" fill="#8a8a8a" />
        <text x={46.600 + i * 159.800 + (i === 9 ? 2.500 : 0)} y="972.700" fontSize="11" textAnchor="middle" fill="#8a8a8a">{i + 1}</text>
      </g>
    ))}
    <text x="47" y="986" fontSize="11" textAnchor="middle" fill="#fff">1</text>
  </Svg>
);
const P = ({ w, children }) => <I w={w} h={16}>{children}</I>;

const HelpRow = styled.div`
  height: 33px;
  flex: none;
  display: flex;
  align-items: center;
  color: #e6e6e6;
`;
const HelpText = styled.div`
  width: 777px;
  padding-left: 8px;
  margin-right: 8px;
  font-size: 10px;
  letter-spacing: -0.28px;
`;
const Mel = styled.div`
  width: 36px;
  margin-left: 15px;
  font-size: 11px;
  letter-spacing: -0.1px;
`;
const GripDots = styled.div`
  width: ${(p) => p.$w}px;
  height: 26px;
  margin-left: 4px;
  background-image: linear-gradient(#888 1px, transparent 1px);
  background-size: 3px 3px;
  mask-image: repeating-linear-gradient(90deg, #000 0 1px, transparent 1px 3px);
`;

/* ---------- taskbar ---------- */
const Taskbar = styled.footer`
  height: 47px;
  flex: none;
  display: flex;
  align-items: center;
  background: linear-gradient(90deg, #222121, #231f20 22%, #2c1d20 40%, #2d1e20 66%, #251e1e 80%, #201f1e);
  color: #fff;
  font-size: 12px;
`;
const Weather = styled.div`
  width: 413px;
  margin-left: 5px;
  padding-bottom: 1px;
  line-height: 16px;
  font-size: 11.500px;
  letter-spacing: -0.05px;
`;
const Muted = styled.div`
  color: #cfcfcf;
`;
const SearchPill = styled.div`
  width: 220px;
  height: 33px;
  margin: 0 2px 0 13px;
  border-radius: 17px;
  background: #403a3c;
  border: 1px solid #5a5456;
  display: flex;
  align-items: center;
  padding: 0 5px 0 10px;
  gap: 9px;
  color: #d8d8d8;
  font-size: 12.500px;
`;
const SearchText = styled.span`
  flex: 1;
`;
const App44 = styled.div`
  position: relative;
  flex: 0 0 44px;
  height: 47px;
  display: flex;
  align-items: center;
  justify-content: center;
`;
const Running = styled.div`
  position: absolute;
  left: ${(p) => (p.$wide ? 14 : 19)}px;
  bottom: 5px;
  width: ${(p) => (p.$wide ? 16 : 6)}px;
  height: 3px;
  border-radius: 2px;
  background: ${(p) => (p.$wide ? "#ffd02e" : "#9a9294")};
`;
const Badge = styled.div`
  position: absolute;
  left: ${(p) => p.$x ?? 24}px;
  top: ${(p) => p.$y ?? 6}px;
  width: 16px;
  height: 16px;
  border-radius: 50%;
  background: ${(p) => p.$bg || "#ffd02e"};
  color: ${(p) => p.$c || "#222"};
  font-size: 10px;
  line-height: 16px;
  text-align: center;
`;
const ActiveApp = styled.div`
  width: 40px;
  height: 40px;
  border-radius: 4px;
  background: #3b3032;
  border: 1px solid #453a3c;
  display: flex;
  align-items: center;
  justify-content: center;
`;
const WeatherIcon = styled.div`
  position: relative;
  width: 26px;
  height: 26px;
  margin-left: 11px;
`;
const Clock = styled.div`
  width: 65px;
  text-align: right;
  font-size: 11.500px;
  line-height: 16px;
  padding-bottom: 1px;
`;
const Notify = styled.div`
  width: 16px;
  height: 16px;
  border-radius: 50%;
  background: #ffd02e;
  color: #222;
  font-size: 10px;
  line-height: 16px;
  text-align: center;
  margin: 0 20px 0 7px;
`;
const SysIcons = styled.div`
  display: flex;
  align-items: center;
`;

const ChromeLogo = () => (
  <I w={24} h={24}>
    <circle cx="12" cy="12" r="12" fill="#fbc116" />
    <path d="M1.600 6A12 12 0 0 0 12 24L17.200 15L12 12L6.800 15Z" fill="#2fa44f" />
    <path d="M12 6.500H22.600A12 12 0 0 0 1.600 6L6.800 15Z" fill="#e33b2e" />
    <circle cx="12" cy="12" r="5.600" fill="#fff" />
    <circle cx="12" cy="12" r="4.500" fill="#3b7ded" />
  </I>
);
const Disc = styled.div`
  width: 24px;
  height: 24px;
  border-radius: ${(p) => p.$r || "50%"};
  background: ${(p) => p.$bg};
  color: ${(p) => p.$c};
  display: flex;
  align-items: center;
  justify-content: center;
  font-size: ${(p) => p.$s}px;
`;

const APPS = [
  { el: <I w={24} h={22}><rect x="6" y="0" width="18" height="16" fill="#eee" /><rect x="0" y="6" width="18" height="16" fill="#777" opacity=".85" /><rect x="6" y="6" width="12" height="10" fill="#bbb" /></I> },
  { el: <I w={23} h={23}><path d="M12 0A11.500 11.500 0 1 1 6 21.500L0 23V11A11.500 11.500 0 0 1 12 0Z" fill="#6264c4" /><path d="M1 11A11.500 11.500 0 0 1 20 3L4 19Z" fill="#8a70b8" opacity=".7" /><rect x="5" y="7" width="9" height="9" rx="1.500" fill="#fff" /><path d="M15 11L18 8V15Z" fill="#fff" /></I> },
  { el: <I w={24} h={24}><path d="M7 6V2H14V6" stroke="#2aa3e8" strokeWidth="2" /><path d="M1 6H23V21Q23 24 20 24H4Q1 24 1 21Z" fill="#eeeeee" /><rect x="7.500" y="9.500" width="4.200" height="4.200" fill="#f25022" /><rect x="12.500" y="9.500" width="4.200" height="4.200" fill="#7fba00" /><rect x="7.500" y="14.500" width="4.200" height="4.200" fill="#00a4ef" /><rect x="12.500" y="14.500" width="4.200" height="4.200" fill="#ffb900" /></I>, badge: "1" },
  { el: <I w={24} h={22}><path d="M0 7L12 0L24 7V22H0Z" fill="#0f5fae" /><path d="M0 7L12 15L24 7V22H0Z" fill="#2fb0ea" /><path d="M3 7H21L12 14.500Z" fill="#eee" /><path d="M24 7V22H9Z" fill="#4cc8f4" /></I> },
  { el: <Disc $bg="#111" $c="#1fd662" $s={24}><FaSpotify /></Disc>, run: true },
  { el: <Disc $bg="linear-gradient(160deg,#0b1a38,#123a68 55%,#1f88c0)" $c="#fff" $s={20}><FaSteamSymbol /></Disc> },
  { el: <I w={24} h={20}><rect x="0" y="0" width="24" height="20" fill="#c8cdd0" /><rect x="1.500" y="1.500" width="21" height="17" fill="#e4eef4" /><path d="M2 15L5 14L7 5L9 12L12 14L15 8L17 12L19 3L21 14L22 18H2Z" fill="#8fc4e4" stroke="#4a90c0" /></I> },
  { el: <Disc $bg="#5865f2" $c="#fff" $s={15}><FaDiscord /></Disc> },
  { el: <I w={22} h={25}><path d="M11 0L22 6L11 12L0 6Z" fill="#7fc04a" /><path d="M0 6L11 12V25L0 18Z" fill="#6b4a2c" /><path d="M22 6L11 12V25L22 18Z" fill="#4c3420" /><path d="M0 6L11 12L22 6V9L18 12L16 11L13 14L11 13L8 14L6 11L3 11L0 9Z" fill="#58962f" /><path d="M3 14h2v3h-2zM7 18h2v2h-2zM14 17h2v3h-2zM18 14h2v2h-2z" fill="#8a6440" /><path d="M6 5h3v1h-3zM12 3h3v1h-3zM12 7h3v1h-3z" fill="#a0dc66" /></I> },
  { el: <ChromeLogo /> },
  { el: <I w={24} h={24}><rect width="24" height="24" fill="#000" /><path d="M6 0H10V24H6ZM14 0H18V24H14Z" fill="#b1060f" /><path d="M6 0H10L18 24H14Z" fill="#e50914" /></I> },
  { el: <I w={24} h={22}><path d="M0 2Q0 0 2 0H8L10 3H0Z" fill="#d89a14" /><path d="M0 3H9L11 2H22Q24 2 24 4V21H0Z" fill="#ffcb3d" /><path d="M0 14H24V21Q24 22 23 22H1Q0 22 0 21Z" fill="#f6b72a" /><path d="M5 22V17Q5 15 7 15H17Q19 15 19 17V22Z" fill="#1f7fd0" /><path d="M7 18H17" stroke="#0f5ba8" strokeWidth="1.500" /></I>, run: true },
  { el: <Disc $bg="#107c10" $c="#fff" $s={20} $r="2px"><FaXbox /></Disc>, badge: "1" },
  { el: <Disc $bg="linear-gradient(60deg,#1e46ff 15%,#7a2bd0 50%,#ff2a2a 88%)" $r="0" $s={10}><I w={16} h={18} vw={18} vh={20}><path d="M6 19V15H3V12L1.500 11L3 8A6.500 6.500 0 1 1 14 13V15L16 19M9 4.500A4 4 0 0 0 7 12L7 15H11V12A4 4 0 0 0 9 4.500Z" stroke="#fff" strokeWidth="1.300" /></I></Disc> },
  { el: <I w={24} h={24}><circle cx="12" cy="12" r="11" stroke="#c81f45" strokeWidth="1.800" /><ellipse cx="12" cy="12" rx="5.500" ry="9.500" stroke="#e0244e" strokeWidth="1.600" /><path d="M11 2.500Q19 4 19 12T11 21.500" stroke="#c81f45" /></I> },
  { el: <ChromeLogo />, badge: "B", bg: "#ec4079", c: "#f8c8d8", run: true },
  { el: <ActiveApp><MayaLogo w={22} h={24} /></ActiveApp>, wide: true },
];

export default function App() {
  return (
    <Screen>
      <Global />
      <TitleBar>
        <I w={10} h={14}><path d="M0 0H8V11H0Z" fill="#2c9ec4" /><path d="M0 11H9V14H0Z" fill="#2b6680" /><path d="M0 9V2L2 6L4 2H6V9H4.500V5L2.500 9Z" fill="#fff" /></I>
        <TitleText>Table UVs.ma* - Autodesk MAYA 2023.3: D:\School\Modeling and Surfacing Essentials\1660-Summer-2023\Challenge 2 - UV Mapping\Table UVs.ma</TitleText>
        <Spacer $w={10} />
        <I w={10} h={10}><path d="M0 5.500H10" stroke="#111" /></I>
        <Spacer $w={35} />
        <I w={10} h={10}><rect x=".5" y="2.500" width="7" height="7" rx="1" stroke="#111" /><path d="M3 .5H8.500Q9.500 .5 9.500 1.500V7" stroke="#111" /></I>
        <Spacer $w={36} />
        <I w={11} h={10}><path d="M.5 0L10.500 10M10.500 0L.5 10" stroke="#111" /></I>
      </TitleBar>

      <MenuBar>
        <MenuItem $w={25} $active>File</MenuItem>
        {MENUS.map(([t, w]) => <MenuItem key={t} $w={w}>{t}</MenuItem>)}
        <Spacer />
        <span>Workspace:</span>
        <Spacer $w={4} />
        <ComboBox $w={192}><ComboText>General</ComboText><ComboArrow><Tri /></ComboArrow></ComboBox>
        <Spacer $w={7} />
        <I w={13} h={16}><path d="M3 7V4.500A3.500 3.500 0 0 1 10 4.500V7" stroke={G} strokeWidth="2" /><rect x="0.500" y="7" width="12" height="9" rx="1" fill={G} /><path d="M6.500 9v5M5.500 10.500h2" stroke="#333" strokeWidth="1.400" /></I>
        <Spacer $w={8} />
      </MenuBar>

      <StatusLine>
        <Spacer $w={6} />
        <ComboBox $w={98} $h={21} $pl={3}><ComboText>Modeling</ComboText><ComboArrow><Tri /></ComboArrow></ComboBox>
        <Slot $w={23}><Handle /></Slot>
        {STATUS_ICONS.map(([w, el], i) => <Slot key={i} $w={w}>{el}</Slot>)}
        {[0, 1, 2, 3, 4, 5].map((k) => <Slot key={k} $w={22}><Collapse /></Slot>)}
        <Slot $w={23}><Handle /></Slot>
        {RENDER_ICONS.map(([w, el], i) => <Slot key={i} $w={w}>{el}</Slot>)}
        <Slot $w={27}><Handle /></Slot>
        <Slot $w={23}><I w={15} h={15}><rect x=".5" y=".5" width="14" height="14" stroke={G} fill="#3a3a3a" /><path d="M7.500 3V12M5 2.500H10M5 12.500H10" stroke={G} strokeWidth="1.200" /></I></Slot>
        <Spacer $w={7} />
        <InputBox $w={164} />
        <Slot $w={24}><Handle /></Slot>
        <UserButton>
          <I w={13} h={15}><circle cx="6.500" cy="4" r="3.200" stroke="#eee" strokeWidth="1.400" /><path d="M1 14.500Q1 8.500 6.500 8.500T12 14.500" stroke="#eee" strokeWidth="1.400" /></I>
          <UserName>Bryan Powell</UserName>
          <Tri c="#eee" />
        </UserButton>
        <Spacer />
        <Slot $w={22}><I w={18} h={20}><path d="M0 6L7 2V19L0 15Z" fill={G} /><path d="M0 10L7 8M0 13L7 14M3.500 4V18" stroke={L} /><path d="M7 1H15L18 4H12V19H9V4H7Z" fill={G} stroke={L} strokeWidth=".6" /></I></Slot>
        <Slot $w={22} $h={22} $bg={BLUE}><I w={18} h={20}><circle cx="9" cy="3" r="2.500" fill={G} /><path d="M1 7H17V10H13V14H12V20H10V15H8V20H6V14H5V10H1Z" fill={G} stroke="#333" strokeWidth=".7" /><rect x="7.500" y="9" width="3" height="3" stroke="#333" /></I></Slot>
        <Slot $w={24}><I w={18} h={18}><path d="M0 2H6M1 9H6M0 16H6" stroke={G} strokeWidth="1.300" /><rect x="7" y=".7" width="10.500" height="3" stroke={G} /><rect x="6" y="6.500" width="12" height="5" fill={G} /><circle cx="10" cy="9" r="1.700" fill="#333" /><rect x="7" y="14.500" width="10.500" height="3" stroke={G} /></I></Slot>
        <Slot $w={21}><I w={16} h={18}><path d="M1.500 2H6M1.500 9H9M1.500 16H9" stroke={G} strokeWidth="1.300" /><circle cx="1.500" cy="2" r="1.500" fill={G} /><circle cx="1.500" cy="9" r="1.500" fill={G} /><circle cx="1.500" cy="16" r="1.500" fill={G} /><path d="M7 0H14L16 3H14V18H11V3H7Z" fill={G} /></I></Slot>
        <Slot $w={25}><I w={17} h={18}><path d="M8.500 0L17 5L8.500 10L0 5Z" fill={G} /><path d="M4 5h8" stroke="#333" /><path d="M0 8.500L8.500 13.500L17 8.500M0 12L8.500 17L17 12" stroke={G} strokeWidth="1.500" /></I></Slot>
        <Spacer $w={2} />
      </StatusLine>
      <HLine />

      <Shelf>
        <ShelfGrip>
          <I w={10} h={5}><path d="M0 1H10M0 4H10" stroke="#aaa" strokeWidth="1.300" /></I>
          <I w={12} h={12}><circle cx="6" cy="6" r="3.300" stroke={G} strokeWidth="1.500" /><circle cx="6" cy="6" r="4.700" stroke={G} strokeWidth="1.200" strokeDasharray="1.800 1.890" /></I>
        </ShelfGrip>
        <ShelfBody>
          <TabStrip>
            {TABS.map(([t, w], i) => <ShelfTab key={t} $w={w} $active={i === 1}>{t}</ShelfTab>)}
          </TabStrip>
          <ShelfIcons>
            {SHELF.map((el, i) => <Slot key={i} $w={34.840}>{el || <ShelfSep />}</Slot>)}
            <ShelfScroll>
              <Tri d="up" w={9} h={5} />
              <I w={10} h={10}><circle cx="5" cy="5" r="5" fill={BTN} /></I>
              <Tri w={9} h={5} />
            </ShelfScroll>
          </ShelfIcons>
        </ShelfBody>
      </Shelf>
      <HLine />

      <Main>
        <Toolbox>
          <Dots />
          <Tool $active $h={36}><I w={30} h={30}><path d="M8 2V25L13 20.500L17 28.500L20.500 27L17 19L25 18.500Z" fill="#d0d0d0" stroke="#444" strokeWidth=".8" /></I></Tool>
          <Tool><I w={30} h={30}><ellipse cx="12" cy="11" rx="12" ry="7.500" transform="rotate(-38 12 11)" stroke={T} strokeWidth="2" strokeDasharray="5 2.500" /><path d="M14 8V27L18 23.500L20.500 28.500L23.500 27L21 22L27 21.500Z" fill={G} stroke="#444" strokeWidth=".8" /></I></Tool>
          <Tool><I w={30} h={30}><ellipse cx="10" cy="18" rx="13" ry="8" transform="rotate(38 10 18)" stroke={T} strokeWidth="2" strokeDasharray="5 2.500" /><path d="M27 2L17 12" stroke={G} strokeWidth="3.500" strokeLinecap="round" /><path d="M18 12Q18 20 7 19Q11 17 12 13Q14 10 16 10Z" fill={G} stroke="#444" strokeWidth=".6" /></I></Tool>
          <Tool $h={36}><I w={30} h={30}><rect x="8" y="9" width="12" height="12" fill={G} /><path d="M10 5.500L14 1.500L18 5.500ZM10 24.500L14 28.500L18 24.500ZM4 11L0 15L4 19ZM24 11L28 15L24 19Z" fill={T} /></I></Tool>
          <Tool $h={37}><I w={30} h={30}><path d="M13 28.500A13.500 13.500 0 1 1 26 16" stroke={T} strokeWidth="1.600" /><path d="M23 15H29L26 19Z" fill={T} /><path d="M13 7L21 15L13 23L5 15Z" fill={G} /></I></Tool>
          <Tool $h={36}><I w={30} h={30}><rect x="2" y="3" width="25" height="25" stroke={T} strokeWidth="1.400" strokeDasharray="4 2" /><path d="M11 14H16V19" stroke={T} strokeWidth="1.300" /><rect x="2" y="17" width="11" height="11" fill={G} /></I></Tool>
          <ToolSep $mt={79} $mb={7} />
          <Tool $h={32}><I w={29} h={29}><rect x="-1" y="0" width="29" height="29" fill={G} /><rect x="2.500" y="2.500" width="23" height="23" stroke="#444" />{diamonds(14, 14, "#444")}</I></Tool>
          <Tool $h={42}><I w={29} h={29}><rect x="-.5" y=".5" width="13" height="12" stroke={G} fill="#3a3a3a" /><rect x="15" y="0" width="13" height="13" fill={G} /><Flat x={21.500} y={6.500} /><rect x="-.5" y="15.500" width="13" height="12" stroke={G} fill="#3a3a3a" /><rect x="15.500" y="15.500" width="12" height="12" stroke={G} fill="#3a3a3a" /><Plus x={6.500} y={6.500} /><Plus x={6.500} y={21.500} /><Plus x={21.500} y={21.500} /></I></Tool>
          <Tool $h={35}><I w={29} h={29}><rect x="-.5" y=".5" width="13" height="27" stroke={G} fill="#3a3a3a" /><rect x="15" y="0" width="13" height="28" fill={G} /><Flat x={21.500} y={14} /><Plus x={6.500} y={13.500} /></I></Tool>
          <Tool $h={36} $active><I w={29} h={29}><rect x="0" y=".5" width="28" height="28" stroke={G} /><rect x="1.500" y="2" width="25" height="25" stroke="#333" /><path d="M6.500 7V26M7 11H11M7 17H11M7 23H11" stroke="#9ab" strokeWidth="1.500" /><path d="M8 5.500H20M14 10.500H24M14 16.500H21M14 22.500H23" stroke="#333" strokeWidth="3" /><path d="M8 5.500H19M14 10.500H23M14 16.500H20M14 22.500H22" stroke={G} /><path d="M4 3.500h4.500v4h-4.500zM10.500 8.500h4v4h-4zM10.500 14.500h4v4h-4zM10.500 20.500h4v4h-4z" fill={G} stroke="#333" strokeWidth=".8" /></I></Tool>
          <ToolSep $mt={5} $mb={7} />
          <Tool $h={32}><I w={29} h={26}><circle cx="11.500" cy="10" r="8" stroke={G} strokeWidth="1.800" /><path d="M17 16L24 23" stroke={G} strokeWidth="3.500" /></I></Tool>
          <Spacer />
          <MayaLogo w={29} h={32} />
          <Spacer $w={6} />
        </Toolbox>
        <VLine />

        <Outliner>
          <OutlinerTabs><OutlinerTab>Outliner</OutlinerTab></OutlinerTabs>
          <OutlinerMenu>
            <MenuItem $w={52}>Display</MenuItem><MenuItem $w={44}>Show</MenuItem><MenuItem $w={40}>Help</MenuItem>
          </OutlinerMenu>
          <SearchRow>
            <I w={16} h={16}><path d="M4 2H12M4 14H12M2.500 4V12M13.500 4V12" stroke="#777" strokeDasharray="2 1" /><path d="M0 0L5 2L1 5ZM16 2.500L11 0V5ZM0 16L5 13.500L0 11ZM16 13.500L11 11V16Z" fill="#777" /></I>
            <SearchField><span>Search...</span><Tri /></SearchField>
          </SearchRow>
          <Tree>
            <TreeBody>
              <Rows>
                {NODES.map(([t, k]) => (
                  <Row key={t} $dim={k === "c"} $set={k === "s"}>{k === "c" ? <CamIcon /> : k === "m" ? <MeshIcon /> : <SetIcon />}<span>{t}</span></Row>
                ))}
              </Rows>
              <VScroll><Tri d="up" w={9} h={5} /><Thumb /><Tri w={9} h={5} /></VScroll>
            </TreeBody>
            <HScroll><Tri d="left" w={5} h={9} /><Thumb $w={227} /><Tri d="right" w={5} h={9} /></HScroll>
          </Tree>
          <ResizeDots />
        </Outliner>
        <VLine />

        <ViewWrap>
          <ViewFrame>
            <ViewMenu>
              <MenuItem $w={40.5}>View</MenuItem><MenuItem $w={58}>Shading</MenuItem><MenuItem $w={58}>Lighting</MenuItem>
              <MenuItem $w={43.5}>Show</MenuItem><MenuItem $w={62}>Renderer</MenuItem><MenuItem $w={40}>Panels</MenuItem>
            </ViewMenu>
            <ViewTools>
              {VIEW_TOOLS.map((t, i) =>
                t === "h" ? <Slot key={i} $w={i === 0 ? 7 : 10.500}><I w={4} h={14}><path d="M2 0V14" stroke="#888" /><rect x=".5" y="3" width="3" height="8" fill="#888" /></I></Slot>
                : <Slot key={i} $w={19.100} $h={19} $bg={t[1]}>{t[0]}</Slot>
              )}
              <Spacer $w={3} />
              <NumField $w={38}>0.00</NumField>
              <Slot $w={23}><V><path d="M7 3A5 5 0 0 0 7 13Z" fill={G} /><path d="M8 2H14V14H8V12A4 4 0 0 0 8 4Z" fill={G} /></V></Slot>
              <NumField $w={38}>1.00</NumField>
              <Spacer $w={3} />
              <Slot $w={18} $h={19} $bg={BLUE}><V><circle cx="8" cy="8" r="7" fill={T} stroke="#24545e" /><text x="8" y="10.800" fontSize="7" fontWeight="700" textAnchor="middle" fill="#24444c">ON</text></V></Slot>
              <Spacer $w={3} />
              <ComboBox $w={198} $h={18} $pl={3}><ComboText>ACES 1.0 SDR-video (sRGB)</ComboText><ComboArrow><Tri /></ComboArrow></ComboBox>
            </ViewTools>
            <Canvas><Scene /></Canvas>
          </ViewFrame>
        </ViewWrap>
        <VLine />

        <Panel>
          <HeadRow>
            <I w={39} h={39}>
              <defs><linearGradient id="hik" x2="0" y2="1"><stop offset="0" stopColor="#0a8ad8" /><stop offset=".5" stopColor="#0b5f98" /><stop offset="1" stopColor="#04283e" /></linearGradient></defs>
              <rect x="0" y="1" width="38" height="37" rx="2" fill="url(#hik)" stroke="#222" />
              <path d="M15 2Q24 7 24 17T9 34.500Q5 35.500 1 34.500" stroke="#e8eef2" strokeWidth="1.600" />
              <circle cx="4.500" cy="5" r="2.200" fill="#fff" />
              <path d="M1 8L7 8L17 5V6.500L8 11L8.500 17L12 30L9.500 31L5 20L2 30H1Z" fill="#fff" />
              <path d="M28 18.500H35.500L31.700 22.500Z" fill="#fff" />
            </I>
            <LabelRows>
              <Label>Character:</Label>
              <ComboBox $w={152}><ComboText>None</ComboText><ComboArrow><Tri /></ComboArrow></ComboBox>
              <Label $dim>Source:</Label>
              <ComboBox $w={152} $dim $pl={7}><ComboText>None</ComboText><ComboArrow $plain><Tri c="#777" /></ComboArrow></ComboBox>
            </LabelRows>
          </HeadRow>
          <Section><Tri c="#eee" w={11} h={6} /><SectionLabel>Create</SectionLabel></Section>
          <PanelButton>Create Skeleton</PanelButton>
          <PanelButton>Create Control Rig</PanelButton>
          <PanelButton>Create Character Definition</PanelButton>
          <PanelButton>Create Custom Rig Mapping</PanelButton>
          <PanelButton $last>Quick Rig Tool</PanelButton>
          <Section><Tri c="#eee" w={11} h={6} /><SectionLabel>Import Samples</SectionLabel></Section>
          <PanelButton>Import Human IK Example</PanelButton>
          <PanelButton>Import Animation Example</PanelButton>
        </Panel>
        <SideTabs>
          <SideTab $h={156}>Channel Box / Layer Editor</SideTab>
          <SideTab $h={102}>Attribute Editor</SideTab>
          <SideTab $h={110}>Modeling Toolkit</SideTab>
          <SideTab $h={89}>Graph Editor</SideTab>
          <SideTab $h={68} $active>Human IK</SideTab>
        </SideTabs>
      </Main>
      <HLine />

      <TimeRow>
        <Track><Timeline /></Track>
        <TransportRow>
          <InputBox $w={88}>1</InputBox>
          <Transport>
            <P w={17}><path d="M1 2V14" stroke={G} strokeWidth="1.600" /><path d="M9 2.500V13.500L2.500 8ZM17 2.500V13.500L10 8Z" fill={G} /></P>
            <P w={12}><path d="M1 2V14" stroke={G} strokeWidth="1.600" /><path d="M12 2.500V13.500L3.500 8Z" fill={G} /></P>
            <P w={13}><path d="M2 0V17" stroke="#ddd" strokeDasharray="2 1" /><rect x="0.500" y="2" width="3.200" height="12" fill="#d8783a" /><path d="M13 2.500V13.500L4.500 8Z" fill={G} /></P>
            <P w={13}><path d="M13 0.500V15.500L0 8Z" fill={G} /></P>
            <P w={13}><path d="M0 .5V15.500L13 8Z" fill={G} /></P>
            <P w={13}><path d="M11.500 0V17" stroke="#ddd" strokeDasharray="2 1" /><rect x="10" y="2" width="3.200" height="12" fill="#d8783a" /><path d="M0 2.500V13.500L9 8Z" fill={G} /></P>
            <P w={12}><path d="M11 2V14" stroke={G} strokeWidth="1.600" /><path d="M0 2.500V13.500L9 8Z" fill={G} /></P>
            <P w={17}><path d="M16 2V14" stroke={G} strokeWidth="1.600" /><path d="M0 2.500V13.500L7 8ZM8 2.500V13.500L14.500 8Z" fill={G} /></P>
          </Transport>
        </TransportRow>
      </TimeRow>
      <HLine />

      <HelpRow>
        <Spacer $w={6} />
        <I w={16} h={16}><circle cx="8" cy="8" r="8" fill="#86b53c" /><text x="8" y="13" fontSize="14" fontWeight="700" textAnchor="middle" fill="#2e3d18">?</text></I>
        <HelpText>Select Tool: select a component</HelpText>
        <VLine />
        <GripDots $w={5} />
        <Mel>MEL</Mel>
        <InputBox $w={409} $h={22} />
        <GripDots $w={1} />
        <Spacer $w={2} />
        <InputBox $w={594} $h={20} />
        <Spacer $w={6} />
        <I w={18} h={18}><rect width="18" height="3" fill={G} /><path d="M1.500 1.500h1m1 0h1m1 0h1" stroke="#333" /><rect y="4" width="18" height="14" fill={G} /><text x="9" y="14.500" fontSize="10" fontWeight="700" textAnchor="middle" fill="#333">{"{;}"}</text></I>
      </HelpRow>

      <Taskbar>
        <WeatherIcon>
          <I w={26} h={26}><circle cx="18" cy="14" r="6" fill="#f08020" /><path d="M5 25A5 5 0 0 1 5 15.500A7 7 0 0 1 17 13A6 6 0 0 1 20 25Z" fill="#b9cff2" /><path d="M3 24Q10 20 22 23L20 25H5Z" fill="#dfe8fa" /></I>
          <Badge $x={11} $y={-3} $bg="#ff9299">1</Badge>
        </WeatherIcon>
        <Weather>73°F<Muted>Mostly cloudy</Muted></Weather>
        <I w={23} h={23}>
          <defs><linearGradient id="win" x2="1" y2="1"><stop offset="0" stopColor="#6fe6ff" /><stop offset="1" stopColor="#1192ee" /></linearGradient></defs>
          <path d="M0 0H11V11H0ZM12 0H23V11H12ZM0 12H11V23H0ZM12 12H23V23H12Z" fill="url(#win)" />
        </I>
        <SearchPill>
          <I w={16} h={16}><circle cx="7" cy="7" r="5.800" stroke="#e0e0e0" strokeWidth="1.800" /><path d="M11 11L15.500 15.500" stroke="#e0e0e0" strokeWidth="2" /></I>
          <SearchText>Search</SearchText>
          <I w={20} h={20}><path d="M10 0A10 10 0 1 1 5 18.500L0 20V10A10 10 0 0 1 10 0Z" fill="#e8f6ff" /><path d="M10 1A9 9 0 1 1 5 17.500L1 19V10A9 9 0 0 1 10 1Z" fill="#1f78e0" /><path d="M7 4V14L9 15.500L14 12.500L13 9.500L10 8.500" stroke="#fff" strokeWidth="2" /></I>
        </SearchPill>
        {APPS.map((a, i) => (
          <App44 key={i}>
            {a.el}
            {a.badge && <Badge $bg={a.bg} $c={a.c}>{a.badge}</Badge>}
            {(a.run || a.wide) && <Running $wide={a.wide} />}
          </App44>
        ))}
        <Spacer />
        <SysIcons>
          <I w={11} h={7}><path d="M.5 6L5.500 1L10.500 6" stroke="#eee" strokeWidth="1.500" /></I>
          <Spacer $w={18} />
          <I w={17} h={13}><path d="M1 5A11 11 0 0 1 16 5M3.500 7.500A7.500 7.500 0 0 1 13.500 7.500M5.800 9.800A4 4 0 0 1 11.200 9.800" stroke="#eee" strokeWidth="1.400" /><circle cx="8.500" cy="11.500" r="1.300" fill="#eee" /></I>
          <Spacer $w={7} />
          <I w={17} h={14}><path d="M.7 4.500H3L7 1V13L3 9.500H.7Z" stroke="#eee" strokeWidth="1.300" /><path d="M9 4.500Q10.500 7 9 9.500M11.300 2.500Q14 7 11.300 11.500" stroke="#eee" strokeWidth="1.300" /><path d="M13.500 1Q17 7 13.500 13" stroke="#777" strokeWidth="1.200" /></I>
          <Spacer $w={6} />
          <I w={17} h={14}><rect x="3" y="3.500" width="11.500" height="8.500" rx="1.500" stroke="#eee" strokeWidth="1.300" /><rect x="5" y="5.500" width="7.500" height="4.500" fill="#eee" /><path d="M15.500 6V10" stroke="#eee" strokeWidth="2" /><path d="M4 -1L0 6H3L2 10L7 3.500H4Z" fill="#eee" stroke="#201f1e" strokeWidth=".6" /></I>
        </SysIcons>
        <Clock>3:53 PM<div>6/1/2023</div></Clock>
        <Notify>2</Notify>
      </Taskbar>
    </Screen>
  );
}
